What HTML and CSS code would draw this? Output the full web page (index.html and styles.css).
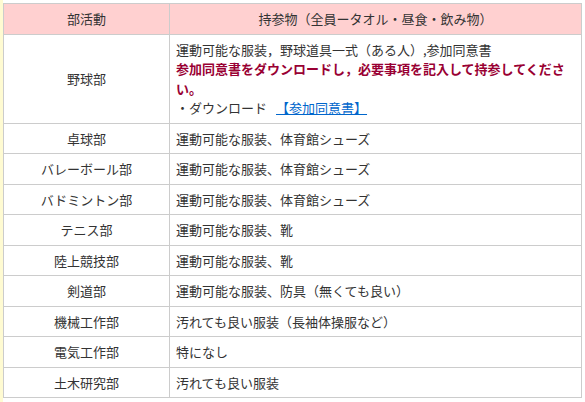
FILE: index.html
```html
<!DOCTYPE html>
<html lang="ja">
<head>
<meta charset="utf-8">
<link rel="stylesheet" href="styles.css">
</head>
<body>
<div class="page">
<table class="club-table">
  <thead>
    <tr><th class="col-club">部活動</th><th class="col-items">持参物（全員ータオル・昼食・飲み物）</th></tr>
  </thead>
  <tbody>
    <tr>
      <td class="club">野球部</td>
      <td class="items">運動可能な服装，野球道具一式（ある人）,参加同意書<br><strong class="notice">参加同意書をダウンロードし，必要事項を記入して持参してください。</strong><br>・ダウンロード<a href="#" class="dl">【参加同意書】</a></td>
    </tr>
    <tr><td class="club">卓球部</td><td class="items">運動可能な服装、体育館シューズ</td></tr>
    <tr><td class="club">バレーボール部</td><td class="items">運動可能な服装、体育館シューズ</td></tr>
    <tr><td class="club">バドミントン部</td><td class="items">運動可能な服装、体育館シューズ</td></tr>
    <tr><td class="club">テニス部</td><td class="items">運動可能な服装、靴</td></tr>
    <tr><td class="club">陸上競技部</td><td class="items">運動可能な服装、靴</td></tr>
    <tr><td class="club">剣道部</td><td class="items">運動可能な服装、防具（無くても良い）</td></tr>
    <tr><td class="club">機械工作部</td><td class="items">汚れても良い服装（長袖体操服など）</td></tr>
    <tr><td class="club">電気工作部</td><td class="items">特になし</td></tr>
    <tr><td class="club">土木研究部</td><td class="items">汚れても良い服装</td></tr>
  </tbody>
</table>
</div>
</body>
</html>
```
FILE: styles.css
```css
html, body {
  margin: 0;
  padding: 0;
  background: #fff;
}
body {
  font-family: "Noto Sans CJK JP", "Noto Sans", sans-serif;
  font-size: 13px;
  color: #333;
}
.page {
  border-left: 3px solid #fffbd2;
  padding-top: 3px;
  min-height: 402px;
  box-sizing: border-box;
}
.club-table {
  border-collapse: collapse;
  width: 579px;
  table-layout: fixed;
}
.club-table th,
.club-table td {
  border: 1px solid #cccccc;
  padding: 5px 6px;
  line-height: 19.5px;
  vertical-align: middle;
}
.club-table th {
  background: #ffd0d0;
  font-weight: normal;
  text-align: center;
}
.col-club { width: 153px; }
.club { text-align: center; }
.items { text-align: left; }
.notice {
  color: #990033;
  font-weight: bold;
}
.dl {
  margin-left: 9px;
  color: #0066cc;
  text-decoration: underline;
}
```
